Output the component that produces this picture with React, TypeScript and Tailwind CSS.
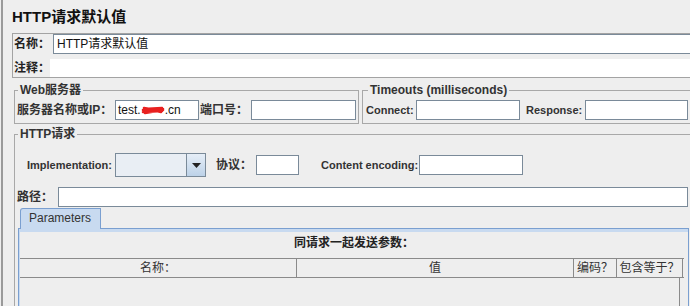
const Scribble = () => (
  <svg width="24" height="10" viewBox="0 0 24 10" className="inline-block align-middle -mt-[2px]">
    <path d="M2 5 L22 4 M2 7 L21 6 M3 3 L20 7 M4 8 L22 5 M3 4 L21 3" stroke="#e8201f" strokeWidth="2.6" fill="none" strokeLinecap="round" />
  </svg>
)

export default function App() {
  return (
    <div className="w-[690px] h-[306px] overflow-hidden bg-[#eeeeee] flex text-[#333333] font-['Liberation_Sans','Noto_Sans_CJK_SC',sans-serif]">
      <div className="ml-px w-[2px] shrink-0 bg-[#9a9a9a]" />
      <div className="flex flex-col shrink-0 w-[700px]">
        <h1 className="pl-[9px] pt-[8px] h-[26px] text-[15px] leading-[18px] font-bold text-[#111111]">HTTP请求默认值</h1>

        {/* name + comments */}
        <div className="mt-[7px] ml-[9px] border border-[#a3a3a3] flex flex-col">
          <div className="flex items-center">
            <span className="w-[40px] pl-[1px] text-[12px] font-bold text-[#222222]">名称：</span>
            <div className="flex-1 h-[20px] bg-white border border-[#7a8a99] pl-[3px] text-[12px] leading-[18px] text-[#111111]">HTTP请求默认值</div>
          </div>
          <div className="flex items-center mt-[5px]">
            <span className="w-[37px] pl-[1px] text-[12px] font-bold text-[#222222]">注释：</span>
            <div className="flex-1 h-[18px] bg-white" />
          </div>
        </div>

        {/* server + timeouts */}
        <div className="flex mt-[5px]">
          <fieldset className="ml-[11px] w-[345px] border border-[#a8a8a8] pb-[3px]">
            <legend className="ml-[3px] px-[2px] text-[12px] leading-[14px] font-bold text-[#333333]">Web服务器</legend>
            <div className="flex items-center pt-[3px]">
              <span className="w-[100px] pl-[2px] text-[12px] font-bold whitespace-nowrap">服务器名称或IP：</span>
              <div className="w-[84px] h-[20px] bg-white border border-[#7a8a99] pl-[2px] text-[12px] leading-[18px] text-[#111111] whitespace-nowrap overflow-hidden">
                test.<Scribble />.cn
              </div>
              <span className="w-[52px] pl-[1px] text-[12px] font-bold">端口号：</span>
              <div className="w-[105px] h-[20px] bg-white border border-[#7a8a99]" />
            </div>
          </fieldset>
          <fieldset className="ml-[3px] flex-1 border border-[#a8a8a8] pb-[3px]">
            <legend className="ml-[5px] px-[2px] text-[12px] leading-[14px] font-bold text-[#333333]">Timeouts (milliseconds)</legend>
            <div className="flex items-center pt-[3px]">
              <span className="w-[53px] pl-[3px] text-[11px] font-bold">Connect:</span>
              <div className="w-[104px] h-[20px] bg-white border border-[#7a8a99]" />
              <span className="w-[65px] pl-[6px] text-[11px] font-bold">Response:</span>
              <div className="w-[103px] h-[20px] bg-white border border-[#7a8a99]" />
            </div>
          </fieldset>
        </div>

        {/* HTTP request */}
        <fieldset className="mt-[3px] ml-[11px] w-[690px] flex-1 border border-[#a8a8a8]">
          <legend className="ml-[3px] px-[2px] text-[12px] leading-[14px] font-bold text-[#333333]">HTTP请求</legend>
          <div className="flex items-center pt-[12px]">
            <span className="w-[100px] pl-[12px] text-[11px] font-bold">Implementation:</span>
            <div className="flex w-[91px] h-[24px] border border-[#7a8a99]">
              <div className="flex-1 bg-[#e9eef4] border-r border-[#7a8a99]" />
              <div className="w-[18px] flex items-center justify-center bg-gradient-to-b from-[#e6eef7] to-[#bdd2e8]">
                <svg width="9" height="5" viewBox="0 0 9 5"><path d="M0 0 H9 L4.5 5 Z" fill="#222222" /></svg>
              </div>
            </div>
            <span className="w-[50px] pl-[10px] text-[12px] font-bold">协议：</span>
            <div className="w-[43px] h-[20px] bg-white border border-[#7a8a99]" />
            <span className="w-[120px] pl-[22px] text-[11px] font-bold whitespace-nowrap">Content encoding:</span>
            <div className="w-[104px] h-[20px] bg-white border border-[#7a8a99]" />
          </div>
          <div className="flex items-center mt-[10px]">
            <span className="w-[43px] pl-[2px] text-[12px] font-bold">路径：</span>
            <div className="w-[630px] h-[20px] bg-white border border-[#7a8a99]" />
          </div>

          {/* tabs */}
          <div className="flex mt-[1px] ml-[5px] relative z-10 -mb-px">
            <div className="w-[81px] h-[21px] bg-[#c8daf0] border border-b-0 border-[#7a9fd0] rounded-tl-[3px] pl-[8px] text-[12px] leading-[19px] text-[#333333]">Parameters</div>
          </div>
          <div className="ml-[3px] w-[671px] h-[80px] border border-[#7a9fd0] flex flex-col">
            <div className="h-[3px] bg-[#c8daf0]" />
            <div className="flex-1 flex flex-col border-l border-[#c8daf0]">
              <div className="pt-[4px] text-center text-[12px] leading-[14px] font-bold text-[#222222]">同请求一起发送参数：</div>
              <div className="mt-[8px] w-[664px] flex-1 flex flex-col">
                <div className="flex h-[20px] border-y border-[#8a8a8a] text-[12px] leading-[18px] text-[#333333]">
                  <div className="w-[277px] text-center border-r border-[#8a8a8a]">名称：</div>
                  <div className="w-[277px] text-center border-r border-[#8a8a8a]">值</div>
                  <div className="w-[43px] text-center border-r border-[#8a8a8a] whitespace-nowrap">编码？</div>
                  <div className="w-[66px] text-center border-r border-[#8a8a8a] whitespace-nowrap">包含等于？</div>
                </div>
                <div className="flex-1 w-[660px] border-r border-[#8a8a8a]" />
              </div>
            </div>
          </div>
        </fieldset>
      </div>
    </div>
  )
}
